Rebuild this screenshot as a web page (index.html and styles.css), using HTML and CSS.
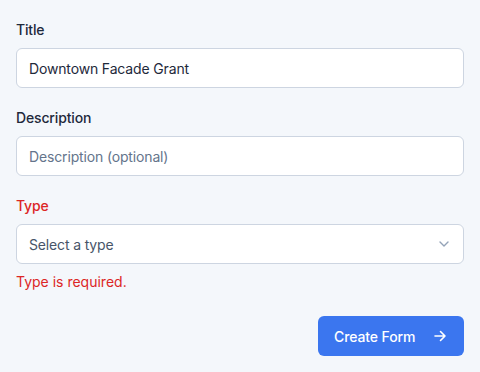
FILE: index.html
```html
<!DOCTYPE html>
<html>
<head>
<meta charset="utf-8">
<link rel="stylesheet" href="styles.css">
</head>
<body>
<form class="form">
  <div class="field">
    <label class="label">Title</label>
    <input class="input" type="text" value="Downtown Facade Grant">
  </div>
  <div class="field">
    <label class="label">Description</label>
    <input class="input" type="text" placeholder="Description (optional)">
  </div>
  <div class="field">
    <label class="label label-error">Type</label>
    <div class="select">
      <span class="select-text">Select a type</span>
      <svg class="chevron" width="16" height="16" viewBox="0 0 16 16" fill="none"><path d="M4 6l4 4 4-4" stroke="#94a3b8" stroke-width="1.4" stroke-linecap="round" stroke-linejoin="round"/></svg>
    </div>
    <div class="error">Type is required.</div>
  </div>
  <div class="actions">
    <button class="btn" type="button">
      <span>Create Form</span>
      <svg width="16" height="16" viewBox="0 0 16 16" fill="none"><path d="M3 8h10M8.5 3.5L13 8l-4.5 4.5" stroke="#fff" stroke-width="1.6" stroke-linecap="round" stroke-linejoin="round"/></svg>
    </button>
  </div>
</form>
</body>
</html>
```
FILE: styles.css
```css
html, body {
  margin: 0;
  padding: 0;
  background: #f4f7fb;
}
body {
  font-family: Inter, "Noto Sans", sans-serif;
  font-size: 14px;
  color: #1e293b;
}
.form {
  padding: 20px 16px 16px;
  display: flex;
  flex-direction: column;
  gap: 20px;
}
.field {
  display: flex;
  flex-direction: column;
  gap: 8px;
}
.label {
  font-size: 14px;
  line-height: 20px;
  font-weight: 500;
  color: #1e293b;
  letter-spacing: -0.15px;
}
.label-error {
  color: #dc2626;
}
.input, .select {
  box-sizing: border-box;
  height: 40px;
  width: 100%;
  border: 1px solid #cdd5e1;
  border-radius: 6px;
  background: #fff;
  padding: 0 12px;
  font-family: inherit;
  font-size: 14px;
  letter-spacing: -0.15px;
  color: #1e293b;
  outline: none;
}
.input::placeholder {
  color: #64748b;
}
.select {
  display: flex;
  align-items: center;
  justify-content: space-between;
  color: #475569;
}
.chevron {
  margin-right: -1px;
}
.error {
  font-size: 14px;
  line-height: 20px;
  color: #dc2626;
}
.actions {
  display: flex;
  justify-content: flex-end;
  margin-top: 4px;
}
.btn {
  height: 40px;
  width: 146px;
  box-sizing: border-box;
  display: flex;
  align-items: center;
  justify-content: space-between;
  padding: 0 16px;
  border: none;
  border-radius: 6px;
  background: #3b76ef;
  color: #fff;
  font-family: inherit;
  font-size: 14px;
  font-weight: 500;
  letter-spacing: -0.1px;
}
```
